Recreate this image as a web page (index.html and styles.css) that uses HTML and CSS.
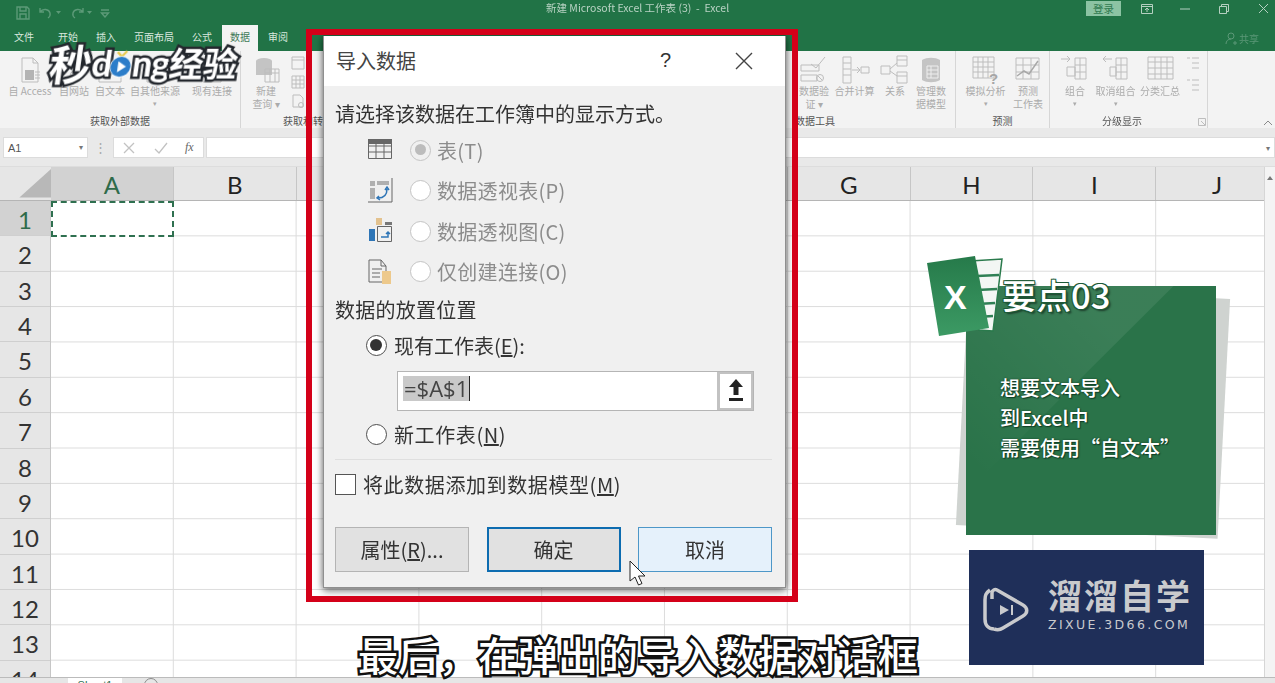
FILE: index.html
```html
<!DOCTYPE html>
<html lang="zh-CN">
<head>
<meta charset="utf-8">
<title>导入数据</title>
<link rel="stylesheet" href="styles.css">
</head>
<body>
<div class="app">
  <header class="titlebar">
    <div class="qat">
      <svg width="14" height="14" viewBox="0 0 14 14"><path d="M1 1h10l2 2v10H1zM4 1v4h6V1M4 13V8h6v5"/></svg>
      <svg width="16" height="14" viewBox="0 0 16 14"><path d="M2 2v4h4M2 6c3-4 9-3 10 1 .5 2-.5 4-2 5"/></svg>
      <svg class="tiny" width="5" height="4" viewBox="0 0 5 4"><path d="M0 0l2.5 3L5 0z"/></svg>
      <svg width="16" height="14" viewBox="0 0 16 14"><path d="M14 2v4h-4M14 6c-3-4-9-3-10 1-.5 2 .5 4 2 5"/></svg>
      <svg class="tiny" width="5" height="4" viewBox="0 0 5 4"><path d="M0 0l2.5 3L5 0z"/></svg>
      <svg width="10" height="10" viewBox="0 0 10 10"><path d="M1 2h8M1.500 5L5 9l3.500-4z"/></svg>
    </div>
    <div class="doc-title">新建 Microsoft Excel 工作表 (3)&nbsp; -&nbsp; Excel</div>
    <div class="win">
      <span class="login">登录</span>
      <svg class="w-display" width="12" height="10" viewBox="0 0 12 10"><path d="M.5.500h11v9H.500zM.5 2.500h11M6 8V4M4 6l2-2 2 2"/></svg>
      <svg class="w-min" width="11" height="10" viewBox="0 0 11 10"><path d="M0 5h10"/></svg>
      <svg class="w-max" width="11" height="10" viewBox="0 0 11 10"><path d="M.5 2.500h7v7h-7zM2.500 2.500v-2h7v7h-2"/></svg>
      <svg class="w-close" width="11" height="11" viewBox="0 0 11 11"><path d="M1 1l9 9M10 1l-9 9"/></svg>
    </div>
  </header>

  <nav class="tabs">
    <span class="tab t-file">文件</span>
    <span class="tab t-home">开始</span>
    <span class="tab t-ins">插入</span>
    <span class="tab t-page">页面布局</span>
    <span class="tab t-form">公式</span>
    <span class="tab active">数据</span>
    <span class="tab t-rev">审阅</span>
    <span class="share">
      <svg width="12" height="13" viewBox="0 0 12 13"><path d="M6 1a3 3 0 1 1 0 6 3 3 0 0 1 0-6zM1 12c0-3 2-5 5-5M8 11h4M10 9v4"/></svg>共享
    </span>
  </nav>

  <section class="ribbon">
    <div class="group g-ext">
      <div class="items">
        <div class="item i46">
          <svg width="30" height="30" viewBox="0 0 30 30"><path class="ln" d="M7 3h11l5 5v19H7zM18 3v5h5"/><rect class="fill-b" x="10" y="15" width="9" height="10"/><path class="ln" d="M20 17h5M20 20h5M20 23h5"/></svg>
          <span>自 Access</span>
        </div>
        <div class="item i42">
          <svg width="30" height="30" viewBox="0 0 30 30"><circle class="ln" cx="17" cy="21" r="6"/><path class="ln" d="M11 21h12M17 15v12"/></svg>
          <span>自网站</span>
        </div>
        <div class="item i30">
          <svg width="30" height="30" viewBox="0 0 30 30"><path class="ln" d="M4 18h22v9H4z"/></svg>
          <span>自文本</span>
        </div>
        <div class="item i60">
          <svg width="30" height="30" viewBox="0 0 30 30"><path class="ln" d="M7 20h16v7H7z"/></svg>
          <span>自其他来源</span>
          <span class="drop">▾</span>
        </div>
        <div class="item i54">
          <svg width="30" height="30" viewBox="0 0 30 30"><path class="ln" d="M6 20h18v7H6z"/></svg>
          <span>现有连接</span>
        </div>
      </div>
      <div class="group-label">获取外部数据</div>
    </div>
    <div class="group g-get">
      <div class="items">
        <div class="item i50">
          <svg width="30" height="30" viewBox="0 0 30 30"><ellipse class="fill-g" cx="13" cy="6" rx="8" ry="3"/><path class="fill-g" d="M5 6h16v14H5z"/><path class="ln" d="M14 14h14v13H14zM14 18h14M19 14v13M24 14v13"/></svg>
          <span>新建<br>查询 ▾</span>
        </div>
        <div class="small-col">
          <svg width="14" height="14" viewBox="0 0 14 14"><path class="ln" d="M1 1h12v12H1zM1 4h12"/></svg>
          <svg width="14" height="14" viewBox="0 0 14 14"><path class="ln" d="M1 1h12v12H1zM1 5h12M1 9h12M5 1v12M9 1v12"/></svg>
          <svg width="14" height="14" viewBox="0 0 14 14"><path class="ln" d="M2 1h7l3 3v9H2z"/><circle class="ln" cx="10" cy="11" r="2.500"/></svg>
        </div>
      </div>
      <div class="group-label">获取和转换</div>
    </div>
    <div class="spacer"></div>
    <div class="group g-tools">
      <div class="items end">
        <div class="item i36">
          <svg width="30" height="30" viewBox="0 0 30 30"><path class="ln" d="M2 10h18v6H2zM2 20h16v6H2zM12 9l5 4 9-11"/><circle class="ln" cx="21" cy="23" r="3.500"/><path class="ln" d="M19 21l4 4"/></svg>
          <span>数据验<br>证 ▾</span>
        </div>
        <div class="item i45">
          <svg width="30" height="30" viewBox="0 0 30 30"><path class="ln" d="M3 2h8v26H3zM3 8h8M3 14h8M3 20h8M12 15h8M17 12l3 3-3 3M21 12h8v6h-8z"/></svg>
          <span>合并计算</span>
        </div>
        <div class="item i36">
          <svg width="30" height="30" viewBox="0 0 30 30"><path class="ln" d="M1 11h9v8H1zM17 1h10v10H17zM17 17h10v11H17zM17 5h10M17 21h10M10 14l7-6M10 16l7 5"/></svg>
          <span>关系</span>
        </div>
        <div class="item i36">
          <svg width="30" height="30" viewBox="0 0 30 30"><path class="fill-g" d="M6 5c5-3 13-3 18 0v20c-5 3-13 3-18 0z"/><path class="ln-w" d="M11 11h11v12H11zM11 15h11M11 19h11M15 11v12"/></svg>
          <span>管理数<br>据模型</span>
        </div>
      </div>
      <div class="group-label">数据工具</div>
    </div>
    <div class="group g-fore">
      <div class="items">
        <div class="item i49">
          <svg width="30" height="30" viewBox="0 0 30 30"><path class="ln" d="M2 2h21v21H2zM2 7h21M2 12h21M2 17h21M7 2v21M12 2v21M17 2v21"/><text class="q" x="18" y="29">?</text></svg>
          <span>模拟分析</span>
          <span class="drop">▾</span>
        </div>
        <div class="item i36">
          <svg width="30" height="30" viewBox="0 0 30 30"><path class="ln" d="M3 3h23v21H3zM3 10h23M3 17h23M10 3v21M18 3v21"/><path class="ln-d" d="M4 21l7-5 5 3 9-13"/></svg>
          <span>预测<br>工作表</span>
        </div>
      </div>
      <div class="group-label">预测</div>
    </div>
    <div class="group g-out">
      <div class="items">
        <div class="item i44">
          <svg width="30" height="30" viewBox="0 0 30 30"><path class="ln" d="M15 3h11v21H15zM15 10h11M15 17h11M20 3v21M7 12h8v9H7zM1 4h9M7 1l3 3-3 3"/></svg>
          <span>组合</span>
          <span class="drop">▾</span>
        </div>
        <div class="item i37">
          <svg width="30" height="30" viewBox="0 0 30 30"><path class="ln" d="M15 3h11v21H15zM15 10h11M15 17h11M20 3v21M9 12h6v9H9zM2 4h9M5 1L2 4l3 3"/></svg>
          <span>取消组合</span>
          <span class="drop">▾</span>
        </div>
        <div class="item i52">
          <svg width="30" height="30" viewBox="0 0 30 30"><path class="ln" d="M3 2h25v22H3zM3 7h25M3 13h25M3 19h25M10 2v22M16 2v22M22 2v22"/></svg>
          <span>分类汇总</span>
        </div>
        <div class="small-col outline">
          <svg width="14" height="14" viewBox="0 0 14 14"><path class="ln" d="M6 2h7M6 7h7M6 12h7M1 2h3"/></svg>
          <svg width="14" height="14" viewBox="0 0 14 14"><path class="ln" d="M6 2h7M6 7h7M6 12h7M1 2h3"/></svg>
        </div>
      </div>
      <div class="group-label">分级显示</div>
      <svg class="launcher" width="8" height="8" viewBox="0 0 8 8"><path class="ln" d="M.5.500h7v7h-7zM3 3l4 4"/></svg>
    </div>
    <svg class="collapse" width="10" height="6" viewBox="0 0 10 6"><path d="M1 5l4-4 4 4"/></svg>
  </section>

  <section class="formula">
    <div class="namebox"><span>A1</span><span class="arrow">▾</span></div>
    <div class="dots">⋮</div>
    <div class="fx-btns">
      <svg width="12" height="12" viewBox="0 0 12 12"><path d="M1 1l10 10M11 1L1 11"/></svg>
      <svg class="check" width="14" height="12" viewBox="0 0 14 12"><path d="M1 7l4 4 8-10"/></svg>
      <i>fx</i>
    </div>
    <div class="fx-input"><span class="arrow">▾</span></div>
  </section>

  <section class="sheet">
    <div class="colhead">
      <div class="corner"><span></span></div>
      <div class="col sel">A</div><div class="col">B</div><div class="col">C</div><div class="col">D</div><div class="col">E</div>
      <div class="col">F</div><div class="col">G</div><div class="col">H</div><div class="col">I</div><div class="col">J</div>
    </div>
    <div class="body">
      <div class="rowhead">
        <div class="row sel">1</div><div class="row">2</div><div class="row">3</div><div class="row">4</div><div class="row">5</div>
        <div class="row">6</div><div class="row">7</div><div class="row">8</div><div class="row">9</div><div class="row">10</div>
        <div class="row">11</div><div class="row">12</div><div class="row">13</div><div class="row">14</div>
      </div>
      <div class="cells"><div class="a1"></div></div>
    </div>
    <div class="vscroll"><span class="up"></span></div>
  </section>

  <footer class="sheettabs">
    <span class="sheettab">Sheet1</span>
    <span class="addsheet"></span>
  </footer>

  <!-- overlays -->
  <div class="brand"><span class="big">秒</span><span class="lat">d</span><span class="playdot">
    <svg width="22" height="30" viewBox="0 0 24 30"><path class="tone" d="M7 2l5 5 5-6"/><circle cx="12" cy="18" r="11"/><path class="tri" d="M9 12l9 6-9 6z"/></svg>
  </span><span class="lat">ng</span>经验</div>

  <div class="dialog">
    <div class="dlg-title">
      <span class="dlg-name">导入数据</span>
      <span class="dlg-help">?</span>
      <svg class="dlg-close" width="18" height="18" viewBox="0 0 18 18"><path d="M1 1l16 16M17 1L1 17"/></svg>
    </div>
    <div class="dlg-body">
      <div class="line intro">请选择该数据在工作簿中的显示方式。</div>
      <div class="opt">
        <svg width="26" height="26" viewBox="0 0 26 26"><path class="t-bar" d="M1 2h24v5H1z"/><path class="t-ln" d="M1.500 2.500h23v19h-23zM1.500 9h23M1.500 15h23M9 7v14M17 7v14"/></svg>
        <span class="radio on-dis"></span><span class="dis">表(T)</span>
      </div>
      <div class="opt">
        <svg width="26" height="28" viewBox="0 0 26 28"><path class="t-ln" d="M1 25h24V1"/><path class="t-fill" d="M3 4h5v5H3zM10 4h12v4H10zM3 11h5v11H3z"/><path class="t-blue" d="M11 21c6 0 9-3 9-9M18 13l2-3 2 3M12 19l-2 2 3 2"/></svg>
        <span class="radio"></span><span class="dis">数据透视表(P)</span>
      </div>
      <div class="opt">
        <svg width="26" height="28" viewBox="0 0 26 28"><path class="t-org" d="M9 1h6v7H9z"/><path class="t-dk" d="M18 5h7v3h-7z"/><path class="t-solid" d="M2 12h6v12H2z"/><path class="t-ln" d="M10.500 9.500h14v15h-14z"/><path class="t-blue2" d="M14 20h7v-5M19 17l2-2 2 2"/></svg>
        <span class="radio"></span><span class="dis">数据透视图(C)</span>
      </div>
      <div class="opt">
        <svg width="26" height="28" viewBox="0 0 26 28"><path class="t-ln" d="M2 2h12l5 6v16H2zM14 2v6h5M5 11h10M5 15h8M5 19h8"/><path class="t-org2" d="M15 13h9v13h-9z"/></svg>
        <span class="radio"></span><span class="dis">仅创建连接(O)</span>
      </div>
      <div class="line place">数据的放置位置</div>
      <div class="choice first"><span class="radio dark on"></span><span>现有工作表(<u>E</u>):</span></div>
      <div class="refbox">
        <div class="ref-val"><span class="selected">=$A$1</span><span class="caret"></span></div>
        <div class="ref-btn"><svg width="14" height="23" viewBox="0 0 14 23"><path d="M7 0l7 8H9.500v8h-5V8H0zM0 19h14v3H0z"/></svg></div>
      </div>
      <div class="choice second"><span class="radio dark"></span><span class="wide">新工作表(<u>N</u>)</span></div>
      <div class="sep"></div>
      <div class="check-row"><span class="box"></span><span class="wide">将此数据添加到数据模型(<u>M</u>)</span></div>
      <div class="btns">
        <button class="btn gray">属性(<u>R</u>)...</button>
        <button class="btn primary">确定</button>
        <button class="btn hover">取消</button>
      </div>
    </div>
  </div>

  <div class="redframe"></div>

  <svg class="cursor" width="18" height="26" viewBox="0 0 18 26"><path d="M1 1v20l5-4 3.500 8 3.500-1.500L9.500 16H16z"/></svg>

  <div class="card-shadow"></div>
  <div class="card">
    <div class="card-title">要点03</div>
    <p class="card-text">想要文本导入<br>到Excel中<br>需要使用“自文本”</p>
  </div>
  <svg class="xl" width="76" height="82" viewBox="0 0 76 82">
    <defs><linearGradient id="xg" x1="0" y1="0" x2="0" y2="1"><stop offset="0" stop-color="#267a4a"/><stop offset="1" stop-color="#3c9a64"/></linearGradient></defs>
    <path class="xl-sheet" d="M43 6l32-2-9 72-14-1z"/>
    <path class="xl-lines" d="M50 21l22-1M50 35l20-1M50 49l18-1M50 62l16-1"/>
    <path fill="url(#xg)" d="M0 8L48 1l14 72-50 8z"/>
    <text class="xl-x" x="17" y="54">X</text>
  </svg>

  <div class="school">
    <svg width="48" height="50" viewBox="0 0 48 50"><path d="M8 5C4 8 3 10 3 15v19c0 7 4 10 9 10M10 14V8c0-3 3-4 5-3l26 15c5 3 5 8 0 11L21 43c-3 2-6 2-9 1"/><path class="s-fill" d="M18 20l9 5-9 5z"/><path d="M30 20v10"/></svg>
    <div class="school-text">
      <div class="school-cn">溜溜自学</div>
      <div class="school-en">ZIXUE.3D66.COM</div>
    </div>
  </div>

  <div class="subtitle">最后，在弹出的导入数据对话框</div>
</div>
</body>
</html>
```

FILE: styles.css
```css
* { box-sizing: border-box; }
html, body { margin: 0; padding: 0; background: #fff; }
body { font-family: "Noto Sans CJK SC", "Noto Sans", sans-serif; }

.app {
  position: relative;
  width: 1275px;
  height: 683px;
  overflow: hidden;
  display: flex;
  flex-direction: column;
  filter: blur(.35px);
}

/* title bar */
.titlebar {
  height: 25px;
  background: #217346;
  display: flex;
  align-items: center;
  position: relative;
  color: #b9d3c4;
  font-size: 10.500px;
  flex: none;
}
.qat { display: flex; align-items: center; gap: 3px; padding-left: 16px; width: 200px; }
.qat svg { fill: none; stroke: #5c9a78; stroke-width: 1.400; margin-right: 5px; }
.qat svg.tiny { fill: #5c9a78; stroke: none; margin-left: -6px; }
.doc-title { position: absolute; left: 546px; top: 1px; line-height: 14px; white-space: nowrap; }
.win { position: absolute; left: 1086px; top: 1px; height: 15px; display: flex; align-items: center; }
.login {
  width: 35px;
  height: 15px;
  line-height: 15px;
  background: #8cc3a3;
  color: #2f7a50;
  text-align: center;
  font-size: 10.500px;
}
.win svg { fill: none; stroke: #b5d0c1; stroke-width: 1; flex: none; }
.w-display { margin-left: 20px; }
.w-min { margin-left: 27px; }
.w-max { margin-left: 28px; }
.w-close { margin-left: 28px; }

/* tabs */
.tabs {
  height: 26px;
  background: #217346;
  position: relative;
  display: flex;
  align-items: center;
  flex: none;
}
.tab { color: #d9e8df; font-size: 10px; height: 26px; line-height: 24px; white-space: nowrap; }
.t-file { margin-left: 14px; }
.t-home { margin-left: 24px; }
.t-ins { margin-left: 18px; }
.t-page { margin-left: 18px; }
.t-form { margin-left: 18px; }
.tab.active {
  margin-left: 10px;
  width: 36px;
  background: #f3f3f3;
  color: #3f7a58;
  text-align: center;
}
.t-rev { margin-left: 10px; }
.share {
  position: absolute;
  left: 1225px;
  top: 6px;
  display: flex;
  align-items: center;
  gap: 2px;
  color: #5b9877;
  font-size: 10px;
}
.share svg { fill: none; stroke: #5b9877; stroke-width: 1; }

/* ribbon */
.ribbon {
  height: 77px;
  background: #f3f3f3;
  display: flex;
  position: relative;
  flex: none;
}
.group {
  display: flex;
  flex-direction: column;
  border-right: 1px solid #d6d6d6;
  position: relative;
}
.items { display: flex; flex: 1; padding-top: 4px; min-height: 0; }
.items.end { justify-content: flex-end; padding-right: 6px; }
.group-label {
  height: 14px;
  line-height: 14px;
  text-align: center;
  font-size: 10px;
  color: #555;
  flex: none;
}
.g-ext { width: 241px; }
.g-ext .items { padding-left: 7px; }
.g-get { width: 118px; }
.g-get .items { padding-left: 0; }
.g-get .group-label { text-align: left; padding-left: 42px; }
.spacer { width: 316px; flex: none; }
.g-tools { width: 281px; }
.g-fore { width: 94px; }
.g-fore .items { padding-left: 5px; }
.g-out { width: 158px; }
.g-out .items { padding-left: 3px; }
.g-out .group-label { padding-right: 13px; }
.item {
  display: flex;
  flex-direction: column;
  align-items: center;
  flex: none;
  font-size: 10px;
  line-height: 12.500px;
  color: #ababab;
  white-space: nowrap;
  text-align: center;
}
.item svg { flex: none; }
.i30 { width: 30px; }
.i36 { width: 36px; }
.i37 { width: 37px; }
.i42 { width: 42px; }
.i44 { width: 44px; }
.i45 { width: 45px; }
.i46 { width: 46px; }
.i49 { width: 49px; }
.i50 { width: 50px; }
.i52 { width: 52px; }
.i54 { width: 54px; }
.i60 { width: 60px; }
.drop { font-size: 7px; line-height: 11px; }
.small-col { display: flex; flex-direction: column; gap: 5px; padding-top: 1px; }
.small-col.outline { gap: 8px; }
.ln { fill: none; stroke: #bdbdbd; stroke-width: 1; }
.ln-w { fill: none; stroke: #eee; stroke-width: 1; }
.ln-d { fill: none; stroke: #a8a8a8; stroke-width: 1.500; }
.fill-b { fill: #b4b4b4; }
.fill-g { fill: #c4c4c4; }
.q { font: bold 15px "Liberation Sans", sans-serif; fill: #a6a6a6; }
.launcher { position: absolute; right: 1px; bottom: 2px; }
.collapse {
  position: absolute;
  left: 1263px;
  top: 69px;
  fill: none;
  stroke: #8a8a8a;
  stroke-width: 1;
}

/* formula bar */
.formula {
  height: 39px;
  background: #e9e9e9;
  display: flex;
  align-items: flex-start;
  padding: 9px 0 0 3px;
  flex: none;
  border-bottom: 1px solid #ddd;
}
.namebox {
  width: 85px;
  height: 21px;
  background: #fff;
  border: 1px solid #dcdcdc;
  display: flex;
  align-items: center;
  justify-content: space-between;
  padding: 0 4px;
  font: 11px "Liberation Sans", sans-serif;
  color: #555;
}
.arrow { font-size: 8px; color: #777; }
.dots { width: 25px; text-align: center; color: #aaa; font: 13px/21px "Liberation Sans", sans-serif; }
.fx-btns {
  width: 91px;
  height: 21px;
  background: #fff;
  border: 1px solid #dcdcdc;
  display: flex;
  align-items: center;
  padding-left: 9px;
  gap: 19px;
}
.fx-btns svg { fill: none; stroke: #c2c2c2; stroke-width: 1.300; flex: none; }
.fx-btns i { font: italic 12px "Liberation Serif", serif; color: #666; margin-left: -2px; }
.fx-input {
  flex: 1;
  height: 21px;
  margin-left: 2px;
  background: #fff;
  border: 1px solid #dcdcdc;
  display: flex;
  align-items: center;
  justify-content: flex-end;
  padding-right: 4px;
}

/* sheet */
.sheet {
  position: relative;
  flex: 1;
  min-height: 0;
  overflow: hidden;
  background: #fff;
}
.colhead { display: flex; height: 34px; background: #e6e6e6; border-bottom: 1px solid #b5b5b5; }
.corner { width: 51px; position: relative; flex: none; }
.corner span {
  position: absolute;
  left: 0;
  top: 0;
  width: 51px;
  height: 34px;
  background: linear-gradient(135deg, #e6e6e6 50%, #b8b8b8 50%);
  clip-path: polygon(100% 6%, 100% 90%, 38% 90%);
}
.col {
  width: 122.800px;
  flex: none;
  text-align: center;
  font: 24px/36px Lato, sans-serif;
  color: #222;
  border-right: 1px solid #c6c6c6;
}
.col.sel { background: #d2d2d2; color: #2f6b4a; }
.body { display: flex; }
.rowhead { width: 51px; flex: none; background: #e6e6e6; border-right: 1px solid #c6c6c6; }
.row {
  height: 35.360px;
  font: 24px/37px Lato, sans-serif;
  color: #333;
  text-align: center;
  border-bottom: 1px solid #cfcfcf;
}
.row.sel { background: #d2d2d2; color: #2f6b4a; }
.cells {
  flex: 1;
  position: relative;
  height: 495px;
  background-image:
    linear-gradient(to right, #dcdcdc 1px, transparent 1px),
    linear-gradient(to bottom, #dcdcdc 1px, transparent 1px);
  background-size: 122.800px 35.360px;
  background-position: -1px -1px;
}
.a1 {
  position: absolute;
  left: 0;
  top: 0;
  width: 123px;
  height: 36px;
  background: #fff;
  border: 2px dashed #2f7050;
}
.vscroll {
  position: absolute;
  top: 0;
  right: 0;
  bottom: 0;
  width: 11px;
  background: #f4f4f4;
  border-left: 1px solid #d6d6d6;
}
.up {
  position: absolute;
  left: 2px;
  top: 6px;
  border: 3px solid transparent;
  border-bottom: 4px solid #777;
}

.sheettabs {
  height: 6px;
  flex: none;
  background: #e6e6e6;
  border-top: 1px solid #bbb;
  display: flex;
  align-items: flex-start;
  position: relative;
  overflow: hidden;
}
.sheettab {
  margin-left: 68px;
  width: 54px;
  height: 20px;
  background: #fff;
  color: #2f7050;
  font: 11px/14px "Liberation Sans", sans-serif;
  text-align: center;
}
.addsheet {
  margin-left: 22px;
  width: 14px;
  height: 14px;
  border: 1px solid #8a8a8a;
  border-radius: 50%;
}

/* video logo */
.brand {
  position: absolute;
  left: 50px;
  top: 38px;
  display: flex;
  align-items: center;
  color: #fff;
  font-size: 34px;
  line-height: 50px;
  font-weight: 700;
  white-space: nowrap;
  -webkit-text-stroke: 5px #23272d;
  paint-order: stroke fill;
  transform: skewX(-8deg);
}
.brand .big { font-size: 42px; }
.brand .lat { font: 700 36px/50px Lato, sans-serif; letter-spacing: -1px; }
.playdot { display: flex; margin: 2px 0 0 -1px; }
.playdot circle { fill: #2c7dc9; stroke: #fff; stroke-width: 1.500; }
.playdot .tri { fill: #fff; stroke: none; }
.playdot .tone { fill: none; stroke: #e8c94a; stroke-width: 2.500; }

/* dialog */
.dialog {
  position: absolute;
  left: 323px;
  top: 36px;
  width: 463px;
  height: 552px;
  background: #f0f0f0;
  border: 1px solid #8f8f8f;
  border-top: 0;
  box-shadow: 0 3px 8px rgba(0, 0, 0, .45), 0 0 6px rgba(0, 0, 0, .3);
  color: #333;
  font-size: 20px;
  display: flex;
  flex-direction: column;
}
.dlg-title {
  height: 50px;
  flex: none;
  background: #fff;
  display: flex;
  align-items: center;
  padding: 0 0 2px 12px;
  position: relative;
  color: #444;
}
.dlg-name { font-size: 20px; }
.dlg-help { position: absolute; left: 336px; top: 8px; font: 20px/32px "Liberation Sans", sans-serif; color: #333; }
.dlg-close { position: absolute; left: 411px; top: 16px; fill: none; stroke: #444; stroke-width: 1.400; }
.dlg-body { padding: 13px 13px 0 11px; flex: 1; }
.line { height: 30px; line-height: 30px; white-space: nowrap; }
.intro { height: 30.750px; }
.opt {
  height: 40.500px;
  display: flex;
  align-items: center;
  padding-left: 32px;
  color: #8c8c8c;
}
.opt svg { width: 26px; flex: none; margin-right: 17px; }
.dis { margin-left: 6px; white-space: nowrap; letter-spacing: .3px; }
.t-ln { fill: none; stroke: #666; stroke-width: 1; }
.t-bar { fill: #666; }
.t-fill { fill: #b0b0b0; }
.t-blue, .t-blue2 { fill: none; stroke: #2e75b6; stroke-width: 1.500; }
.t-org { fill: #e3c28e; }
.t-org2 { fill: #edc98c; }
.t-dk { fill: #777; }
.t-solid { fill: #2e75b6; }
.radio {
  width: 21px;
  height: 21px;
  flex: none;
  border-radius: 50%;
  background: #fff;
  border: 1.500px solid #c4c4c4;
  position: relative;
  display: block;
}
.on-dis { background: #f0f0f0; }
.on-dis::after {
  content: "";
  position: absolute;
  left: 3.500px;
  top: 3.500px;
  width: 11px;
  height: 11px;
  border-radius: 50%;
  background: #bcbcbc;
}
.radio.dark { border-color: #4d4d4d; }
.radio.on::after {
  content: "";
  position: absolute;
  left: 3px;
  top: 3px;
  width: 12px;
  height: 12px;
  border-radius: 50%;
  background: #333;
}
.place { margin-top: 3px; letter-spacing: .25px; }
.choice {
  height: 28px;
  display: flex;
  align-items: center;
  gap: 7px;
  margin-left: 31px;
  white-space: nowrap;
}
.choice.first { margin-top: 7px; }
.choice.second { margin-top: 10px; }
.wide { letter-spacing: .6px; }
.refbox {
  margin: 11px 0 0 62px;
  width: 357px;
  height: 40px;
  background: #fff;
  border: 1px solid #b5b5b5;
  display: flex;
}
.ref-val { flex: 1; padding: 4px 0 0 5px; display: flex; align-items: flex-start; }
.selected {
  background: #c9c9c9;
  font: 22px/25px "Open Sans", sans-serif;
  color: #444;
  padding: 0 1px;
}
.caret { width: 1px; height: 25px; background: #222; }
.ref-btn {
  width: 36px;
  flex: none;
  border: 3px solid #c2c2c2;
  border-width: 2px 2px 2px 3px;
  display: flex;
  align-items: center;
  justify-content: center;
}
.ref-btn svg { fill: #222; }
.sep { margin-top: 10px; height: 1px; background: #dfdfdf; }
.check-row {
  margin-top: 11px;
  height: 28px;
  display: flex;
  align-items: center;
  gap: 7px;
  white-space: nowrap;
}
.box { width: 21px; height: 21px; background: #fff; border: 1.500px solid #555; flex: none; }
.btns { display: flex; justify-content: space-between; margin-top: 28px; }
.btn {
  width: 134px;
  height: 45px;
  padding: 0;
  font: 20px/41px "Noto Sans CJK SC", sans-serif;
  color: #333;
  text-align: center;
  background: #e1e1e1;
  border: 1px solid #b4b4b4;
}
.btn.primary { border: 2px solid #0d6cb0; background: #e1e1e1; }
.btn.hover { border: 1px solid #4d97c8; background: #e5f1fb; }

.redframe {
  position: absolute;
  left: 306px;
  top: 29px;
  width: 492px;
  height: 573px;
  border: 6.500px solid #d40019;
}
.cursor {
  position: absolute;
  left: 629px;
  top: 560px;
  fill: #fff;
  stroke: #222;
  stroke-width: 1;
}

/* note card */
.card-shadow {
  position: absolute;
  left: 962px;
  top: 292px;
  width: 262px;
  height: 240px;
  background: #cfd3d0;
  transform: rotate(3deg);
}
.card {
  position: absolute;
  left: 966px;
  top: 286px;
  width: 250px;
  height: 249px;
  background: #2a7349;
  color: #fff;
  overflow: visible;
}
.card::before {
  content: "";
  position: absolute;
  inset: 0;
  clip-path: polygon(0 0, 83% 0, 0 83%);
  background: linear-gradient(45deg, rgba(255, 255, 255, 0) 15%, rgba(255, 255, 255, .08) 70%);
}
.card-title {
  position: absolute;
  left: 36px;
  top: -14px;
  font-size: 34.500px;
  line-height: 44px;
  font-weight: 500;
  white-space: nowrap;
  text-shadow: 1px 1px 0 #1d5a37, -1px 1px 0 #1d5a37, 1px -1px 0 #1d5a37, -1px -1px 0 #1d5a37, 2px 2px 2px rgba(0, 0, 0, .5);
}
.card-text {
  position: absolute;
  left: 34px;
  top: 87px;
  margin: 0;
  font-size: 20px;
  line-height: 30px;
  font-weight: 500;
  white-space: nowrap;
  text-shadow: 1px 1px 1px #123f26, 0 0 2px #123f26;
}
.xl { position: absolute; left: 927px; top: 255px; }
.xl-sheet { fill: #f3f6f4; stroke: #2a7a4c; stroke-width: 1.500; }
.xl-lines { fill: none; stroke: #2f8055; stroke-width: 2.500; }
.xl-x { font: 700 34px "Liberation Sans", sans-serif; fill: #fff; }

/* school logo */
.school {
  position: absolute;
  left: 969px;
  top: 550px;
  width: 235px;
  height: 115px;
  background: #1f2f59;
  display: flex;
  align-items: center;
  padding: 0 0 4px 13px;
  color: #c9cacd;
}
.school svg { fill: none; stroke: #c9cacd; stroke-width: 3.500; flex: none; margin-top: 8px; }
.school svg .s-fill { fill: #c9cacd; stroke: none; }
.school svg path:last-child { stroke-width: 2; }
.school-text { margin-left: 18px; margin-top: -4px; }
.school-cn { font-size: 34px; line-height: 40px; font-weight: 700; letter-spacing: 2px; white-space: nowrap; }
.school-en { font: 12.500px/16px "DejaVu Sans", sans-serif; letter-spacing: 2.400px; white-space: nowrap; margin-top: 2px; }

/* subtitle */
.subtitle {
  position: absolute;
  left: 358px;
  top: 627px;
  font-size: 40px;
  line-height: 54px;
  font-weight: 500;
  color: #fff;
  white-space: nowrap;
  -webkit-text-stroke: 5px #111;
  paint-order: stroke fill;
}
```
